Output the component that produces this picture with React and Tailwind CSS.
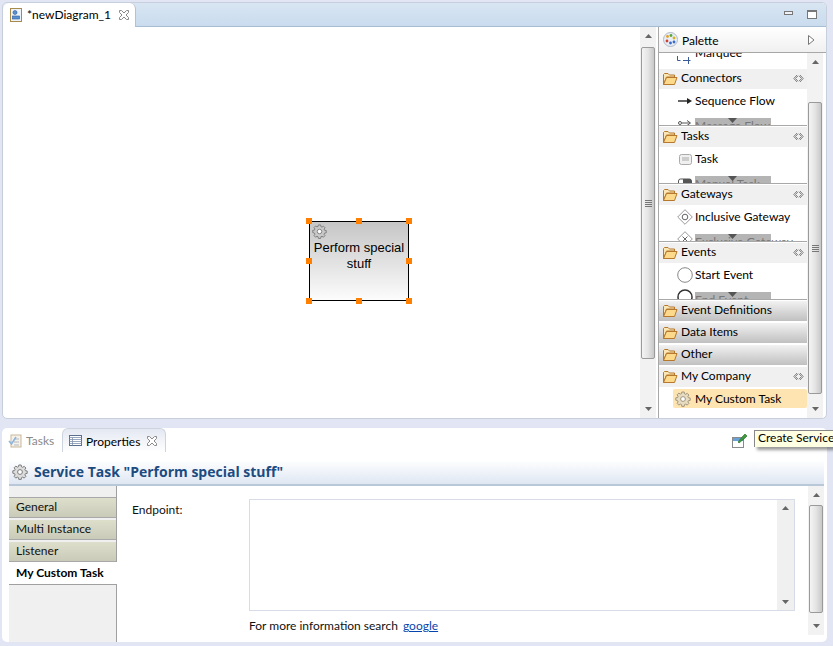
import React from "react";

const Folder = () => (
  <svg width="16" height="14" viewBox="0 0 16 14" className="shrink-0">
    <path d="M1.5 12.5V2.5L2.5 1.5H6L7.5 3H12.5V5H4.5L1.5 12.5Z" fill="#fbe7b6" stroke="#b5782c" />
    <path d="M1.5 12.5L4.5 5.5H15L12.5 12.5Z" fill="#fdd98c" stroke="#b5782c" />
  </svg>
);

const Gear = ({ size = 16, color = "#7d7d7d", fill = "#dcdcdc" }) => (
  <svg width={size} height={size} viewBox="0 0 16 16" className="shrink-0">
    <path
      d="M6.8 1h2.4l.3 1.8 1.2.5 1.5-1 1.7 1.7-1 1.5.5 1.2 1.8.3v2.4l-1.8.3-.5 1.2 1 1.5-1.7 1.7-1.5-1-1.2.5-.3 1.8H6.8l-.3-1.8-1.2-.5-1.5 1-1.7-1.7 1-1.5-.5-1.2L.8 9.2V6.8l1.8-.3.5-1.2-1-1.5 1.7-1.7 1.5 1 1.2-.5z"
      fill={fill}
      stroke={color}
      strokeWidth="1"
    />
    <circle cx="8" cy="8" r="2.4" fill="#fff" stroke={color} />
  </svg>
);

const CloseX = () => (
  <svg width="12" height="12" viewBox="0 0 12 12" className="shrink-0">
    <path d="M1.5 1.5h2L6 4l2.5-2.5h2v2L8 6l2.5 2.5v2h-2L6 8l-2.5 2.5h-2v-2L4 6 1.5 3.5z" fill="#fff" stroke="#8a8a8a" />
  </svg>
);

const Arrow = ({ up }) => (
  <svg width="7" height="4" viewBox="0 0 7 4">
    <path d={up ? "M3.5 0 7 4H0Z" : "M0 0H7L3.5 4Z"} fill="#666" />
  </svg>
);

const Grip = () => (
  <div className="flex flex-col gap-[1px]">
    <div className="w-[7px] h-[1px] bg-[#777]" />
    <div className="w-[7px] h-[1px] bg-[#777]" />
    <div className="w-[7px] h-[1px] bg-[#777]" />
    <div className="w-[7px] h-[1px] bg-[#777]" />
  </div>
);

const Scrollbar = ({ before, thumb, grip, className }) => (
  <div className={"w-[16px] shrink-0 flex flex-col bg-[#f2f2f2] " + className}>
    <div className="flex items-center justify-center" style={{ height: 18 }}>
      <Arrow up />
    </div>
    <div className="shrink-0" style={{ height: before }} />
    <div
      className="shrink-0 mx-[1px] w-[14px] border border-[#9a9a9a] rounded-[2px] bg-gradient-to-r from-[#f4f4f4] via-[#e4e4e4] to-[#c8c8c8] flex items-center justify-center"
      style={{ height: thumb }}
    >
      {grip && <Grip />}
    </div>
    <div className="flex-1" />
    <div className="flex items-center justify-center h-[18px]">
      <Arrow />
    </div>
  </div>
);

const Collapse = () => (
  <svg width="11" height="9" viewBox="0 0 11 9" className="absolute right-[3px] top-[5px]">
    <path d="M4 1 .8 4.5 4 8M5 1.8 2.5 4.5 5 7.2" fill="none" stroke="#808080" strokeWidth="1" />
    <path d="M7 1 10.2 4.5 7 8M6 1.8 8.5 4.5 6 7.2" fill="none" stroke="#808080" strokeWidth="1" />
  </svg>
);

const DrawerHead = ({ label, open }) =>
  open ? (
    <div className="relative h-[20px] bg-[#f0f0f0] flex items-center pl-[3px] gap-[3px] text-black">
      <Folder />
      <span className="-translate-y-[1px]">{label}</span>
      <Collapse />
    </div>
  ) : (
    <div className="h-[20px] bg-gradient-to-b from-[#f2f2f2] to-[#c0c0c0] flex items-center pl-[3px] gap-[3px] text-black">
      <Folder />
      <span className="-translate-y-[1px]">{label}</span>
    </div>
  );

const Item = ({ icon, label }) => (
  <div className="h-[24px] flex items-center pl-[17px] text-black">
    <div className="w-[18px] h-[18px] flex items-center justify-center shrink-0 mr-[1px]">{icon}</div>
    <span>{label}</span>
  </div>
);

const Clipped = ({ icon, label }) => (
  <div className="relative h-[12px] overflow-hidden">
    <div className="absolute left-[17px] top-[1px] w-[18px] h-[18px] flex items-center justify-center">{icon}</div>
    <div className="absolute left-[36px] top-[5px] w-[76px] h-[20px] bg-[#b4b4b4] text-[#777] whitespace-nowrap leading-[16px]">{label}</div>
    <svg width="9" height="5" viewBox="0 0 9 5" className="absolute left-[69px] top-[5px]">
      <path d="M0 0H9L4.5 5Z" fill="#555" />
    </svg>
  </div>
);

const Drawer = ({ label, icon, item, clipIcon, clip }) => (
  <div>
    <DrawerHead label={label} open />
    <Item icon={icon} label={item} />
    <Clipped icon={clipIcon} label={clip} />
    <div className="h-[2px] border-t border-[#a8a8a8] bg-white" />
  </div>
);

const Handle = ({ className }) => <div className={"absolute w-[6px] h-[6px] bg-[#ff8000] " + className} />;

const SideTab = ({ label }) => (
  <div className="h-[20px] mb-[2px] pl-[7px] flex items-center bg-gradient-to-b from-[#dedfcb] to-[#c9cab8] text-[#111] border-b border-[#a9a9a9]">
    <span className="-translate-y-[1px]">{label}</span>
  </div>
);

export default function App() {
  return (
    <div
      className="w-[833px] h-[646px] bg-[#e1e5f4] overflow-hidden relative flex flex-col pt-[2px] pl-[2px] text-[12px] leading-[16px]"
      style={{ fontFamily: '"Lato","Open Sans",sans-serif' }}
    >
      {/* Upper editor */}
      <div className="w-[825px] h-[417px] shrink-0 bg-white rounded-[5px] border border-[#c8cfdc] flex flex-col overflow-hidden">
        <div className="h-[24px] shrink-0 flex bg-gradient-to-b from-[#d9e5f2] to-[#c9dcee] border-b border-[#a9bdd2]">
          <div className="w-[133px] h-[24px] bg-white rounded-t-[6px] border-r border-[#b8c0cc] flex items-center pl-[7px] text-black">
            <svg width="12" height="14" viewBox="0 0 12 14" className="shrink-0 mr-[5px]">
              <rect x="0.5" y="0.5" width="11" height="13" fill="#eef3fa" stroke="#a88a4c" />
              <circle cx="5" cy="4.5" r="2" fill="#5b8fd0" stroke="#2a5a98" strokeWidth="0.6" />
              <rect x="2.5" y="8" width="7" height="3" fill="#5b8fd0" stroke="#2a5a98" strokeWidth="0.6" />
            </svg>
            <span className="w-[91px] shrink-0 whitespace-nowrap">*newDiagram_1</span>
            <CloseX />
          </div>
          <div className="flex-1 flex items-center justify-end pr-[9px] gap-[14px]">
            <div className="w-[9px] h-[4px] border border-[#777] bg-[#eef2f7] mb-[4px]" />
            <div className="w-[10px] h-[9px] border border-[#777] bg-white border-t-[2px]" />
          </div>
        </div>
        <div className="flex-1 flex min-h-0">
          {/* Canvas */}
          <div className="relative w-[637px] shrink-0">
            <div className="absolute left-[306px] top-[194px] w-[100px] h-[80px] border border-black bg-gradient-to-b from-[#c6c6c6] to-[#fcfcfc] text-[13px] leading-[16px] text-center text-black pt-[18px]" style={{ fontFamily: '"Liberation Sans",sans-serif' }}>
              <div className="absolute left-[2px] top-[2px]">
                <Gear size={15} fill="#c8c8c8" />
              </div>
              <div>Perform special</div>
              <div>stuff</div>
              <Handle className="left-[-4px] top-[-4px]" />
              <Handle className="left-[46px] top-[-4px]" />
              <Handle className="right-[-4px] top-[-4px]" />
              <Handle className="left-[-4px] top-[36px]" />
              <Handle className="right-[-4px] top-[36px]" />
              <Handle className="left-[-4px] bottom-[-4px]" />
              <Handle className="left-[46px] bottom-[-4px]" />
              <Handle className="right-[-4px] bottom-[-4px]" />
            </div>
          </div>
          <Scrollbar before={2} thumb={312} grip className="" />
          <div className="w-[2px] shrink-0 bg-white" />
          {/* Palette */}
          <div className="flex-1 flex flex-col min-w-0 border-l border-[#a8a8a8]">
            <div className="h-[26px] shrink-0 flex items-center pl-[4px] pr-[11px] bg-gradient-to-b from-white to-[#f0f0f0] border-b border-[#a8a8a8] text-black">
              <svg width="15" height="15" viewBox="0 0 15 15" className="shrink-0 mr-[4px]">
                <circle cx="7.5" cy="7.5" r="7" fill="#e8eef6" stroke="#b0b8c4" />
                <circle cx="4.5" cy="4.5" r="1.4" fill="#e8a020" />
                <circle cx="8" cy="3.5" r="1.4" fill="#58a840" />
                <circle cx="11" cy="6" r="1.4" fill="#d8b020" />
                <circle cx="4" cy="9" r="1.4" fill="#d04030" />
                <circle cx="7.5" cy="11" r="1.4" fill="#3868c8" />
                <circle cx="11" cy="10" r="1.4" fill="#3868c8" />
              </svg>
              <span className="flex-1 translate-y-[1px]">Palette</span>
              <svg width="7" height="10" viewBox="0 0 7 10">
                <path d="M.5.5 6 5 .5 9.5Z" fill="#fff" stroke="#777" />
              </svg>
            </div>
            <div className="flex-1 flex min-h-0">
              <div className="w-[148px] shrink-0 flex flex-col overflow-hidden">
                <div className="relative h-[15px] shrink-0 overflow-hidden bg-white border-b border-white">
                  <svg width="14" height="8" viewBox="0 0 14 8" className="absolute left-[18px] top-[3px]">
                    <path d="M.5 0v4.5h3M6 4.5h3M11.5 1v7M8.5 4.5h5" fill="none" stroke="#3a5a9a" />
                  </svg>
                  <div className="absolute left-[36px] top-[-8px] text-black">Marquee</div>
                </div>
                <div className="h-[1px] shrink-0 bg-white" />
                <Drawer
                  label="Connectors"
                  item="Sequence Flow"
                  icon={
                    <svg width="14" height="6" viewBox="0 0 14 6">
                      <path d="M0 3H10" stroke="#333" strokeWidth="1.5" />
                      <path d="M9 0 14 3 9 6Z" fill="#222" />
                    </svg>
                  }
                  clipIcon={
                    <svg width="14" height="10" viewBox="0 0 14 10">
                      <circle cx="2" cy="5" r="1.5" fill="none" stroke="#555" />
                      <path d="M4 5H12M9 2.5 12.5 5 9 7.5" fill="none" stroke="#555" />
                    </svg>
                  }
                  clip="Message Flow"
                />
                <Drawer
                  label="Tasks"
                  item="Task"
                  icon={
                    <svg width="13" height="11" viewBox="0 0 13 11">
                      <rect x="0.5" y="0.5" width="12" height="10" rx="2" fill="#f0f0f0" stroke="#aaa" />
                      <path d="M3 4H10M3 6H10" stroke="#aaa" />
                    </svg>
                  }
                  clipIcon={
                    <svg width="14" height="12" viewBox="0 0 14 12">
                      <rect x="0.5" y="4" width="13" height="8" rx="2" fill="#fff" stroke="#555" />
                      <rect x="5" y="4" width="8" height="4" fill="#555" />
                    </svg>
                  }
                  clip="Manual Task"
                />
                <Drawer
                  label="Gateways"
                  item="Inclusive Gateway"
                  icon={
                    <svg width="16" height="16" viewBox="0 0 16 16">
                      <path d="M8 .7 15.3 8 8 15.3.7 8Z" fill="#fff" stroke="#999" />
                      <circle cx="8" cy="8" r="2.8" fill="#fff" stroke="#666" />
                    </svg>
                  }
                  clipIcon={
                    <svg width="16" height="16" viewBox="0 0 16 16">
                      <path d="M8 .7 15.3 8 8 15.3.7 8Z" fill="#fff" stroke="#999" />
                      <path d="M5.5 5.5 10.5 10.5M10.5 5.5 5.5 10.5" stroke="#666" />
                    </svg>
                  }
                  clip="Exclusive Gateway"
                />
                <div>
                  <DrawerHead label="Events" open />
                  <Item
                    icon={
                      <svg width="16" height="16" viewBox="0 0 16 16">
                        <circle cx="8" cy="8" r="7.3" fill="#fff" stroke="#888" />
                      </svg>
                    }
                    label="Start Event"
                  />
                  <Clipped
                    icon={
                      <svg width="16" height="16" viewBox="0 0 16 16">
                        <circle cx="8" cy="8" r="7" fill="#fff" stroke="#333" strokeWidth="1.5" />
                      </svg>
                    }
                    label="End Event"
                  />
                  <div className="h-[2px] border-t border-[#a8a8a8] bg-white" />
                </div>
                <div className="flex flex-col gap-[2px]">
                  <DrawerHead label="Event Definitions" />
                  <DrawerHead label="Data Items" />
                  <DrawerHead label="Other" />
                  <DrawerHead label="My Company" open />
                </div>
                <div className="h-[19px] mt-[2px] ml-[14px] bg-[#fde4b0] rounded-[2px] flex items-center pl-[2px] gap-[4px] text-black">
                  <Gear size={16} color="#a0967e" fill="#e8dcc0" />
                  <span>My Custom Task</span>
                </div>
              </div>
              <Scrollbar before={31} thumb={292} grip className="" />
            </div>
          </div>
        </div>
      </div>
      {/* Lower */}
      <div className="mt-[9px] w-[825px] h-[214px] shrink-0 bg-white rounded-[5px] flex flex-col relative">
        <div className="h-[24px] shrink-0 flex items-stretch">
          <div className="w-[60px] flex items-center pl-[6px] gap-[3px] text-[#8a8a8a] shrink-0">
            <svg width="15" height="15" viewBox="0 0 15 15" className="shrink-0">
              <rect x="3" y="2" width="10" height="12" fill="#f6f2ea" stroke="#c8b79a" />
              <path d="M6 6H11M6 9H11M6 12H11" stroke="#b0b8c4" />
              <path d="M1 8 3.5 11 8 4" fill="none" stroke="#8db4dc" strokeWidth="1.6" />
            </svg>
            <span className="translate-y-[1px]">Tasks</span>
          </div>
          <div className="w-[104px] rounded-t-[6px] bg-gradient-to-b from-[#e4e8f2] to-white border border-b-0 border-[#cdd3df] flex items-center pl-[6px] text-black shrink-0">
            <svg width="13" height="11" viewBox="0 0 13 11" className="shrink-0 mr-[4px]">
              <rect x="0.5" y="0.5" width="12" height="10" fill="#fff" stroke="#5a6f8e" />
              <path d="M0.5 2.5H12.5M0.5 4.5H12.5M0.5 6.5H12.5M0.5 8.5H12.5M3.5 2.5V10.5" stroke="#7d92b0" strokeWidth="0.8" />
            </svg>
            <span className="w-[60px] shrink-0 translate-y-[1px]">Properties</span>
            <CloseX />
          </div>
          <div className="flex-1 flex items-center justify-end pr-[80px]">
            <svg width="15" height="15" viewBox="0 0 15 15">
              <rect x="0.5" y="4.5" width="11" height="10" fill="#fff" stroke="#8a8a8a" />
              <rect x="1" y="5" width="10" height="3" fill="#6aa0d8" />
              <path d="M6 9 11 3l2-2 2 2-2 2-6 5Z" fill="#3f9a3a" stroke="#1f6a20" strokeWidth="0.6" />
            </svg>
          </div>
        </div>
        <div className="ml-[7px] mr-[3px] flex-1 flex flex-col min-h-0 mt-[8px]">
          <div className="h-[26px] shrink-0 flex items-center pl-[3px] gap-[6px] bg-gradient-to-b from-white to-[#dfe7f3] border-b-2 border-[#b9c8d8]">
            <Gear size={16} />
            <span className="text-[14px] font-bold text-[#1c4b80] whitespace-nowrap" style={{ fontFamily: '"Open Sans",sans-serif' }}>Service Task "Perform special stuff"</span>
          </div>
          <div className="flex-1 flex min-h-0">
            <div className="w-[108px] shrink-0 bg-[#f0f0f0] border-r border-[#a0a0a0] flex flex-col">
              <div className="h-[12px] shrink-0 border-b border-[#a8a8a8]" />
              <SideTab label="General" />
              <SideTab label="Multi Instance" />
              <SideTab label="Listener" />
              <div className="h-[23px] -mt-[2px] mr-[-1px] pl-[7px] flex items-center bg-white font-bold text-black border-b border-[#a0a0a0] whitespace-nowrap">
                My Custom Task
              </div>
            </div>
            <div className="flex-1 flex min-w-0 pt-[13px]">
              <div className="w-[132px] shrink-0 pl-[15px] pt-[3px] text-[#111]">Endpoint:</div>
              <div className="w-[546px] shrink-0 flex flex-col">
                <div className="h-[112px] border border-[#d8dce6] flex justify-end">
                  <div className="w-[17px] bg-[#f0f0f0] flex flex-col items-center justify-between py-[6px]">
                    <Arrow up />
                    <Arrow />
                  </div>
                </div>
                <div className="mt-[7px] text-[#111]">
                  For more information search <span className="text-[#0645ad] underline ml-[2px]">google</span>
                </div>
              </div>
              <div className="flex-1" />
              <div className="w-[16px] shrink-0 -mt-[13px] mb-[7px]">
                <Scrollbar before={1} thumb={108} className="h-full" />
              </div>
            </div>
          </div>
        </div>
      </div>
      {/* Tooltip */}
      <div className="absolute left-[754px] top-[430px] w-[79px] h-[17px] bg-[#ffffe1] border-l border-t border-[#888] pl-[3px] text-black whitespace-nowrap overflow-hidden leading-[14px] shadow-[3px_3px_3px_rgba(0,0,0,0.4)]">
        Create Service
      </div>
    </div>
  );
}
